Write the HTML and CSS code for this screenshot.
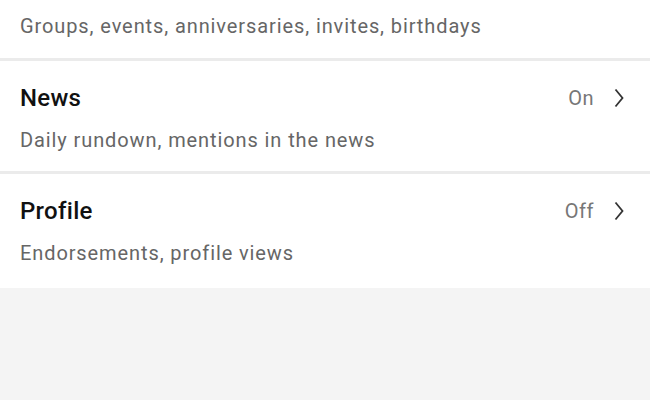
FILE: index.html
```html
<!DOCTYPE html>
<html lang="en">

<head>
    <meta charset="UTF-8">
    <meta name="viewport" content="width=device-width, initial-scale=1.0">
    <title>Notifications</title>
    <link rel="stylesheet" href="styles.css">
</head>

<body>
    <ul class="settings">
        <li class="item item-first">
            <p class="desc">Groups, events, anniversaries, invites, birthdays</p>
        </li>
        <li class="item">
            <div class="head">
                <h3>News</h3>
                <span class="state">On</span>
                <svg class="chevron" width="10" height="20" viewBox="0 0 10 20">
                    <polyline points="1.5,1.5 8.5,10 1.5,18.5" />
                </svg>
            </div>
            <p class="desc">Daily rundown, mentions in the news</p>
        </li>
        <li class="item">
            <div class="head">
                <h3>Profile</h3>
                <span class="state">Off</span>
                <svg class="chevron" width="10" height="20" viewBox="0 0 10 20">
                    <polyline points="1.5,1.5 8.5,10 1.5,18.5" />
                </svg>
            </div>
            <p class="desc">Endorsements, profile views</p>
        </li>
    </ul>
</body>

</html>
```

FILE: styles.css
```css
* {
    margin: 0;
    padding: 0;
}

ul {
    list-style: none;
}

html,
body {
    height: 100%;
}

body {
    background: #f4f4f4;
    color: #666;
    font-family: Roboto, "Liberation Sans", sans-serif;
}

.settings {
    background: #fff;
}

.item {
    padding: 23px 26px 19px 20px;
    border-bottom: 3px solid #ebebeb;
}

.item:last-child {
    border-bottom: none;
    padding-bottom: 23px;
}

.item-first {
    padding-top: 14px;
    padding-bottom: 20px;
}

.head {
    display: flex;
    align-items: center;
    margin-bottom: 16px;
}

.head h3 {
    flex: 1;
    font-size: 24px;
    line-height: 28px;
    font-weight: 500;
    letter-spacing: 0.3px;
    color: #111;
}

.state {
    font-size: 20px;
    letter-spacing: 0.5px;
    color: #777;
    margin-right: 20px;
}

.chevron {
    display: block;
    fill: none;
    stroke: #333;
    stroke-width: 1.8;
}

.desc {
    font-size: 20px;
    line-height: 24px;
    letter-spacing: 0.9px;
    color: #666;
}
```
